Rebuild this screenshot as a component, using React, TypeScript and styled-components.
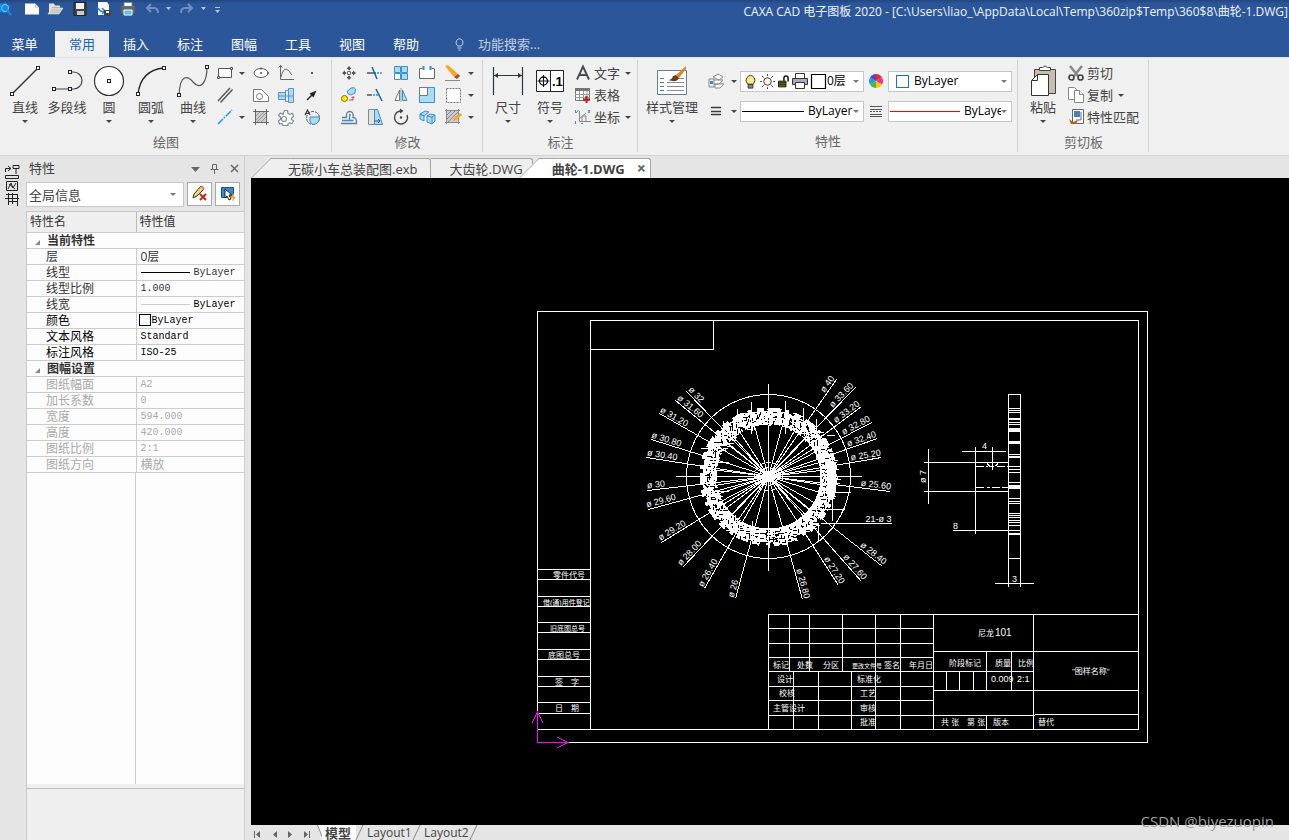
import React from "react";
import styled, { createGlobalStyle } from "styled-components";

const UI = `"Open Sans", "Noto Sans", "Noto Sans CJK SC", sans-serif`;
const BLUE = "#2b579a";

const Global = createGlobalStyle`
  *, *::before, *::after { box-sizing: border-box; }
  body { margin: 0; background: #e5e5e5; font-family: ${UI}; font-size: 13px; line-height: 16px; color: #444; overflow: hidden; }
  button, select, input { font: inherit; color: inherit; margin: 0; }
  button { padding: 0; border: 0; background: none; cursor: pointer; }
  svg { display: block; }
`;

const Shell = styled.div`
  display: flex;
  flex-direction: column;
  height: 100vh;
  min-height: 600px;
`;

/* ---------- icons ---------- */

const D = "#555";
const B = "#3a8fd0";
const L = "#a9dcf5";

const icons: Record<string, React.ReactNode> = {
  rect: <g fill="#fff" stroke={D}><path d="M2.5 4.500H15.500V13.500H2.500Z" /><path fill="#ddd" d="M1.500 12.500h2v2h-2zM14.500 3.500h2v2h-2z" /></g>,
  lines: <path d="M2 15L14 2M4.500 16.500L16.500 3.500" stroke={D} strokeWidth="1.400" />,
  guide: <path d="M2 16L16 2" stroke="#1a9be6" strokeWidth="1.500" strokeDasharray="7 1 2 1" />,
  ellipse: <g fill="#fff" stroke={D}><ellipse cx="9" cy="9" rx="7" ry="4.500" /><path d="M8.500 8.500h1v1h-1zM8.500 4h1v1h-1zM15.500 8.500h1v1h-1z" /></g>,
  contour: <g fill="#fff" stroke="#777"><path d="M1.500 3.500H9.500L16.500 10.500V15.500H1.500Z" /><circle cx="7.500" cy="10.500" r="3" /></g>,
  hatch: <g stroke="#666"><path d="M3.500 3.500H14.500V14.500H3.500Z" fill="#ccc" /><path d="M1 3.500H17M1 14.500H17M3.500 1V17M14.500 1V17" /><path d="M4 8L8 4M4 12L12 4M5 14L14 5M9 14L14 9" stroke="#999" /></g>,
  formula: <g stroke="#666" fill="none"><path d="M3.500 1V15.500H17M1.500 3.500L3.500 1.500 5.500 3.500" /><path d="M4 13Q6 5 9 5Q11 5 15 11" /></g>,
  shaft: <g stroke="#5d92bd"><path d="M1.500 6.500h7v7h-7z" fill={L} /><path d="M8.500 4.500h3v11h-3z" fill="#dff1fa" /><path d="M11.500 2.500h5v14h-5z" fill={L} /><path d="M1 10h16" /></g>,
  gear: <g fill="#fff" stroke="#7d8b99" strokeWidth="1.200"><path d="M7.500 2.500h3l.5 3 2 .8 2.500-1 1 3-2 1.700v1.500l2 1.500-1.500 2.500-2.500-.7-1.500 1v1.700H6l-1-2-2.500.5-1-3 2-1.500V9l-2-1.500 2-2.500 2.500 1.500z" /><circle cx="7" cy="11" r="2.500" /></g>,
  dot: <path d="M8 8h2v2h-2z" fill={D} />,
  arrow: <g><path d="M4 14L10 8" stroke="#222" strokeWidth="1.500" /><path d="M13.500 4.500L6.500 7.500 10.500 11.500Z" fill="#222" /></g>,
  local: <g><circle cx="10" cy="10" r="6.500" fill="none" stroke={D} strokeDasharray="3 1" /><path d="M7 9h9.500q0 7-6.500 7.500L7 14z" fill={L} stroke={B} /><path d="M2 7L4.500 2 7 7M3 5.500h3" stroke="#333" fill="none" strokeWidth="1.200" /></g>,
  move: <g fill={D}><path d="M9 2L11.500 5H6.500ZM9 16L11.500 13H6.500ZM2 9L5 6.500V11.500ZM16 9L13 6.500V11.500Z" /><path d="M8 4h2v2H8zM8 12h2v2H8zM4 8h2v2H4zM12 8h2v2h-2z" /><circle cx="9" cy="9" r="1.800" fill="none" stroke={D} /></g>,
  trim: <g fill="none"><path d="M1 9h9" stroke={D} strokeWidth="1.500" /><path d="M11 9h6" stroke={B} strokeWidth="1.300" strokeDasharray="2 1" /><path d="M6 3l5 12" stroke="#1368ad" strokeWidth="1.500" /></g>,
  array: <g stroke={B} fill={L}><path d="M2.500 2.500h6v6h-6zM9.500 2.500h6v6h-6zM9.500 9.500h6v6h-6z" /><path d="M2.500 9.500h6v6h-6z" fill="#fff" /></g>,
  chamfer: <g><path d="M1.500 5V14.500H16.500V5M1.500 4.500h3M16.500 4.500h-3" stroke="#666" fill="#fff" /><path d="M5.500 2v4M12.500 2v4" stroke={B} strokeWidth="2" /></g>,
  erase: <g><path d="M1 2L4 1 14 10 10 13Z" fill="#f6a81c" /><path d="M10 13l4-3 2 2-3 3z" fill="#9a4b33" /><path d="M1 16.500h15" stroke="#888" /></g>,
  copyObj: <g><path d="M7 5.500L11 2q4-1 4.500 1L15 7l-4 2q-4-1-4-3.500z" fill={L} stroke={B} /><circle cx="4.500" cy="12.500" r="3" fill="#ffe900" stroke="#806f00" /><path d="M9 14h4v-3M11.500 12L13 10.500l1.500 1.500" fill="none" stroke="#d33" /></g>,
  extend: <g fill="none"><path d="M1 9h5" stroke={D} strokeWidth="1.500" /><path d="M7 9h5" stroke={B} strokeDasharray="2 1" strokeWidth="1.500" /><path d="M10 3l6 12" stroke="#1368ad" strokeWidth="1.500" /></g>,
  mirror: <g><path d="M7.500 4v10.500H3z" fill="#fff" stroke="#777" /><path d="M10.500 4v10.500h4.500z" fill={L} stroke={B} /><path d="M9 2v14" stroke="#999" /></g>,
  scale: <g stroke={B}><path d="M1.500 1.500h15v15h-15z" fill={L} /><path d="M1.500 1.500h8v8h-8z" fill="#fff" stroke="#777" /></g>,
  select: <path d="M2.500 2.500h14v14h-14z" fill="#fff" stroke="#777" strokeDasharray="2 1" />,
  offset: <g fill="none"><path d="M1 15.500H16.500Q17 9.500 13 9.500Q14 3.500 9.500 3.500Q6 3.500 6.500 9.500H2" stroke="#667c91" strokeWidth="1.300" /><path d="M2 12.500H13.500M9.500 12V8.500Q11 6.500 9 6.500" stroke={B} strokeWidth="1.300" /></g>,
  stretch: <g><path d="M2.500 1.500h6v15h-6z" fill="#e4e4e4" stroke="#888" /><path d="M8.500 1.500h3l5 15h-8z" fill={L} stroke={B} /><path d="M8 13h5M12 11l2 2-2 2" fill="none" stroke={D} /></g>,
  rotate: <g fill="none" stroke="#444" strokeWidth="1.400"><path d="M9 3A6.500 6.500 0 1 0 15 7" /><path d="M8 0.500L11.500 3 8 5.500" fill="#444" stroke="none" /><circle cx="9" cy="9.500" r="1.200" fill="#444" stroke="none" /></g>,
  explode: <g fill={L} stroke={B}><path d="M2 6l5-3 4 1-5 4zM2 6v5l4 2V8zM9 8l3-2 5 1v6l-3 3-5-2zM9 8l5 1v7M14 9l3-2" /></g>,
  editHatch: <g><path d="M2.500 2.500h12v12h-12z" fill="#ccc" stroke={D} /><path d="M1 2.500h15M1 14.500h15M2.500 1v15M14.500 1v15M3 7l4-4M3 11l8-8M4 14l10-10" stroke="#888" /><path d="M9 13l1-3 6-5 2 2-6 5z" fill="#f6a81c" /></g>,
  letterA: <path d="M3 15.500L9 2.500 15 15.500M5.500 11h7" fill="none" stroke="#444b55" strokeWidth="1.900" />,
  table: <g><path d="M1.500 2.500h14v12h-14z" fill="#fff" stroke="#777" /><path d="M1 2h15v3H1z" fill="#777" /><path d="M1 8.500h15M1 11.500h15M5.500 5v9M9.500 5v9M13 5v9" stroke="#999" /><path d="M9 13.500h7M12.500 10v7" stroke="#c4161c" strokeWidth="2" /></g>,
  coord: <g fill="none"><path d="M5.500 3v10.500H17M5 11l7-6M8 13V8h4v5" stroke="#888" /><path d="M1.500 2v3M4.500 2L2 5M14 2l2 3M16 2l-2 3M1.500 13v3M7 15.500h2" stroke={B} /></g>,
  layers: <g fill="#fff" stroke="#888"><path d="M6 5l5-3 5 3-4 3zM6 8l10 0-4 4H6zM8 12h9l-4 4H8z" /><path d="M2 7h5v8H2z" fill="#eee" /><path d="M3 9h3v3H3z" fill="#4286c5" stroke="none" /></g>,
  weights: <path d="M4 5.500h10M4 9.500h10M4 12.500h10" stroke="#333b45" strokeWidth="1.400" />,
  wheel: <g><path d="M9 9V2A7 7 0 0 1 15 5.500z" fill="#ea2630" /><path d="M9 9l6-3.500a7 7 0 0 1 0 7z" fill="#f0308c" /><path d="M9 9l6 3.500A7 7 0 0 1 9 16z" fill="#ffc400" /><path d="M9 9v7a7 7 0 0 1-6-3.500z" fill="#4cb848" /><path d="M9 9l-6 3.500a7 7 0 0 1 0-7z" fill="#1e9ad6" /><path d="M9 9L3 5.500A7 7 0 0 1 9 2z" fill="#5543c6" /></g>,
  linetype: <g stroke="#555"><path d="M3 4.500h12M3 14.500h12M3 7.500h12M3 12.500h12" /><path d="M3 9.500h12" strokeDasharray="2 1" /></g>,
  bulb: <g><path d="M6 12Q3 8 5 5Q9 0 13 5Q15 8 12 12z" fill="#ffe680" stroke="#333" /><path d="M6.500 12h5v4h-5z" fill="#888" stroke="#333" /></g>,
  sun: <g stroke="#333"><circle cx="9" cy="9" r="4" fill="#fff3e0" /><path d="M9 1v2M9 15v2M1 9h2M15 9h2M3 3l2 2M13 13l2 2M3 15l2-2M13 5l2-2" /></g>,
  lock: <g><path d="M3 8.500h9v7H3z" fill="#6f7d00" stroke="#111" /><path d="M9.500 8V5Q9.500 2.500 12 2.500T14.500 5V9" fill="none" stroke="#111" strokeWidth="1.800" /><path d="M3 10.500h9M3 13h9" stroke="#111" /></g>,
  printer: <g stroke="#333"><path d="M4.500 1.500h9v5h-9z" fill="#fff" /><path d="M1.500 6.500h15v6h-15z" fill="#aab" /><path d="M4.500 10.500h9v6h-9z" fill="#fff" /></g>,
  swatch: <path d="M2.500 2.500h14v14h-14z" fill="#fff" stroke="#000" strokeWidth="1.200" />,
  cut: <g><path d="M3 2L11 12M15 2L7 12" stroke="#888" strokeWidth="2.500" /><circle cx="4.500" cy="13.500" r="2.500" fill="none" stroke="#444" strokeWidth="1.700" /><circle cx="13.500" cy="13.500" r="2.500" fill="none" stroke="#444" strokeWidth="1.700" /></g>,
  copy: <g fill="#fff" stroke="#888"><path d="M1.500 1.500h6l3 3v9h-9z" /><path d="M7.500 4.500h5l4 4v8h-9z" /><path d="M12.500 4.500v4h4" /></g>,
  match: <g><path d="M5.500 1.500h11v14h-11z" fill="#fff" stroke="#666" /><path d="M7 3h6v6H7z" fill="#4a80b5" /><path d="M14 4v8M9 12h5" stroke="#666" /><path d="M2 11l4 3 5-2-2 4H4z" fill="#a96021" /></g>,
};

const Icon = ({ name, size = 18 }: { name: string; size?: number }) => (
  <svg width={size} height={size} viewBox="0 0 18 18" fill="none" aria-hidden="true">{icons[name]}</svg>
);

const Node = ({ x, y }: { x: number; y: number }) => <rect x={x - 1.5} y={y - 1.5} width="3" height="3" fill="#fff" stroke="#222" />;

const bigIcons: Record<string, React.ReactNode> = {
  line: <><path d="M5 31L31 5" stroke="#333" strokeWidth="1.500" /><Node x={5} y={31} /><Node x={31} y={5} /></>,
  poly: <><path d="M21 9H24.500A8.500 8.500 0 0 1 24.500 26H5" stroke="#3a4250" strokeWidth="1.200" /><Node x={5} y={26} /><Node x={21} y={26} /><Node x={21} y={9} /></>,
  circle: <><circle cx="18" cy="18" r="14.500" fill="#fff" stroke="#333" strokeWidth="1.200" /><Node x={18} y={18} /></>,
  arc: <><path d="M5 31Q8 7 31 5" stroke="#222" strokeWidth="1.300" /><Node x={5} y={31} /><Node x={31} y={5} /></>,
  spline: <><path d="M4 32C5 10 13 13 18 19C26 28 32 19 32 4" stroke="#555" strokeWidth="1.200" /><Node x={4} y={32} /><Node x={32} y={4} /></>,
  dim: <><path d="M3.500 4V32M32.500 4V32M4 12.500H32" stroke="#2d3640" strokeWidth="1.200" /><path d="M4 12.500l4-2.500v5zM32 12.500l-4-2.500v5z" fill="#2d3640" /></>,
  symbol: <><path d="M4.500 7.500h27v21h-27zM18.500 7.500v21" fill="#fff" stroke="#222" /><circle cx="11.500" cy="18" r="4" stroke="#111" strokeWidth="1.300" /><path d="M5.500 18h12M11.500 12v12" stroke="#111" /><text x="20" y="23" fontSize="13" fontWeight="700" fontFamily="Liberation Sans, sans-serif" fill="#000">.1</text></>,
  style: <><path d="M3.500 7.500h29v24h-29z" fill="#fff" stroke="#5f7f9c" /><path d="M6 15.500h4M6 19.500h4M6 23.500h4M6 27.500h4" stroke="#578" /><path d="M13 19.500h17M13 23.500h17M13 27.500h17M22 15.500h8" stroke="#88a" /><path d="M32 3L22 12l3 3 7-9z" fill="#d9892c" /><path d="M14 17q4 0 5-4l3-1 3 3q-2 5-11 2z" fill="#6d3c14" /></>,
  paste: <><path d="M9.500 6.500h21v24h-21z" fill="#c8bdb1" stroke="#444" /><path d="M14.500 7.500v-3h3q2.500-3 5 0h3v3z" fill="#fff" stroke="#444" /><path d="M12.500 11.500h11v21h-17v-15z" fill="#fff" stroke="#333" /><path d="M12.500 11.500v6h-6" stroke="#333" /></>,
};

const Caret = styled.span<{ $light?: boolean }>`
  flex: none;
  width: 0;
  height: 0;
  border: 3px solid transparent;
  border-top-color: ${(p) => (p.$light ? "#777" : "#444")};
  border-bottom: 0;
`;

/* ---------- title bar and menu ---------- */

const TitleBar = styled.header`
  display: flex;
  align-items: flex-start;
  justify-content: space-between;
  height: 31px;
  background: linear-gradient(#234680 0, ${BLUE} 4px);
  color: #f0f4fa;
`;
const QuickBar = styled.div`display: flex; flex: none;`;
const Title = styled.h1`
  margin: 4px 1px 0 0;
  font-size: 12px;
  line-height: 16px;
  font-weight: 400;
  white-space: nowrap;
`;

const QuickAccess = () => (
  <QuickBar>
    <svg width="224" height="20" viewBox="0 0 224 20" fill="none" role="img" aria-label="快速启动工具栏">
      <path d="M0 3l3 1 3-2 1 3 3 0-1 4-3 4-6-1z" fill="#1386e8" />
      <circle cx="5" cy="8" r="3.500" stroke="#7fd0ff" /><path d="M7 10l4 5" stroke="#1b8df0" strokeWidth="2" />
      <path d="M25 3.500h10l4 4v7H25z" fill="#fff" /><path d="M35 3.500l4 4h-4z" fill="#ccc" />
      <path d="M49 3.500h5l1 2h5v2H52l-3 6z" fill="#e8e4dc" /><path d="M52 8h11l-4 6H48z" fill="#d0ccc4" stroke="#fff" strokeWidth=".5" />
      <path d="M74 2.500h12v13H74z" fill="#444" stroke="#222" /><path d="M76 3h8v6h-8z" fill="#f4f4f4" /><path d="M77 11h7v4h-7z" fill="#ccc" />
      <path d="M98 2h9l2 3v10H98z" fill="#fff" /><path d="M98 8q3 5 6 3M102 8l3 3-3 3" stroke="#278ad0" strokeWidth="1.500" /><path d="M104 10h7v6h-7z" fill="#444" /><path d="M106 11h3v2h-3z" fill="#fff" />
      <path d="M124 2.500h8v5h-8z" fill="#fff" stroke="#888" /><path d="M121 6h14v7h-14z" fill="#666" /><path d="M124 10h8v5h-8z" fill="#4fc3ea" stroke="#fff" />
      <g stroke="#7191c1" strokeWidth="2"><path d="M147 8h7q4 0 4 5M151 4l-4 4 4 4" /><path d="M192 8h-7q-4 0-4 5M188 4l4 4-4 4" /></g>
      <path d="M166 7h5l-2.500 3zM201 7h5l-2.500 3zM215 10h5l-2.500 3z" fill="#b8c8e0" /><path d="M215 7.500h5" stroke="#b8c8e0" />
    </svg>
  </QuickBar>
);

const MenuBar = styled.nav`
  display: flex;
  height: 26px;
  background: ${BLUE};
  color: #fff;
`;
const MenuTab = styled.button<{ $active?: boolean }>`
  width: 54px;
  line-height: 24px;
  color: ${(p) => (p.$active ? "#1364c4" : "#fff")};
  background: ${(p) => (p.$active ? "#f0f0f0" : "transparent")};
`;
const FileTab = styled(MenuTab)`width: 49px; margin-right: 6px;`;
const Search = styled.label`
  display: flex;
  align-items: center;
  gap: 12px;
  margin-left: 20px;
  input { width: 120px; border: 0; padding: 0; background: none; outline: 0; line-height: 24px; }
  input::placeholder { color: #c3d0e4; opacity: 1; }
`;

/* ---------- ribbon ---------- */

const Ribbon = styled.div`
  display: flex;
  flex: none;
  height: 99px;
  background: #f0f0f0;
  border-top: 1px solid #dfe3ea;
  border-bottom: 1px solid #d2d2d2;
`;
const GroupBox = styled.section<{ $w: number }>`
  display: flex;
  flex-direction: column;
  flex: none;
  width: ${(p) => p.$w}px;
  padding: 4px 4px 0;
  background: linear-gradient(#d2d2d2, #d2d2d2) right 2px / 1px 92px no-repeat;
`;
const GroupBody = styled.div`display: flex; height: 66px;`;
const GroupTitle = styled.h2`
  margin: 0;
  font-size: 13px;
  font-weight: 400;
  line-height: 28px;
  text-align: center;
  color: #666;
`;
const BigButton = styled.button<{ $wide?: boolean }>`
  display: flex;
  flex-direction: column;
  align-items: center;
  flex: none;
  width: ${(p) => (p.$wide ? 60 : 42)}px;
  padding-top: 1px;
  line-height: 16px;
  white-space: nowrap;
  ${Caret} { margin-top: 5px; }
`;
const ToolGrid = styled.div<{ $cols: string }>`
  display: grid;
  grid-template-columns: ${(p) => p.$cols};
  grid-auto-rows: 22px;
`;
const IconButton = styled.button`display: flex; align-items: center; justify-content: center;`;
const RowButton = styled.button`
  display: flex;
  align-items: center;
  gap: 2px;
  height: 22px;
  white-space: nowrap;
  ${Caret} { margin-left: 3px; }
`;
const Stack = styled.div`display: flex; flex-direction: column; margin-left: 3px;`;
const PropGrid = styled.div`
  display: grid;
  grid-template-columns: 24px 12px 124px 24px 124px;
  grid-auto-rows: 30px;
  align-items: center;
  margin: 4px 0 0 2px;
`;
const Combo = styled.div`
  display: flex;
  align-items: center;
  height: 21px;
  padding: 0 4px 0 1px;
  background: #fff;
  border: 1px solid #c6c6c6;
  overflow: hidden;
  font-size: 12px;
  color: #000;
`;
const Select = styled.select`
  flex: 1;
  min-width: 0;
  padding: 0;
  border: 0;
  background: none;
  appearance: none;
  outline: 0;
  line-height: 18px;
`;
const LineSample = styled.span<{ $w: number; $c: string }>`
  flex: none;
  width: ${(p) => p.$w}px;
  height: 1px;
  margin: 0 4px 0 0;
  background: ${(p) => p.$c};
`;
const ColorBox = styled.span`
  width: 13px;
  height: 13px;
  margin: 0 5px 0 6px;
  border: 1px solid #1173d0;
  flex: none;
`;

const Big = ({ icon, label, caret = true, wide }: { icon: string; label: string; caret?: boolean; wide?: boolean }) => (
  <BigButton $wide={wide}>
    <svg width="36" height="36" viewBox="0 0 36 36" fill="none" aria-hidden="true">{bigIcons[icon]}</svg>
    {label}
    {caret && <Caret />}
  </BigButton>
);
const Tool = ({ icon, label }: { icon: string; label: string }) => (
  <IconButton aria-label={label}><Icon name={icon} /></IconButton>
);
const Drop = ({ label }: { label: string }) => <IconButton aria-label={label}><Caret /></IconButton>;
const Blank = styled.span``;

const Group = ({ title, w, children }: { title: string; w: number; children: React.ReactNode }) => (
  <GroupBox $w={w}><GroupBody>{children}</GroupBody><GroupTitle>{title}</GroupTitle></GroupBox>
);

const DrawGroup = () => (
  <Group title="绘图" w={332}>
    <Big icon="line" label="直线" /><Big icon="poly" label="多段线" caret={false} /><Big icon="circle" label="圆" />
    <Big icon="arc" label="圆弧" /><Big icon="spline" label="曲线" />
    <ToolGrid $cols="22px 12px 25px 26px 26px">
      <Tool icon="rect" label="矩形" /><Drop label="矩形选项" /><Tool icon="ellipse" label="椭圆" /><Tool icon="formula" label="公式曲线" /><Tool icon="dot" label="点" />
      <Tool icon="lines" label="平行线" /><Blank /><Tool icon="contour" label="多边形" /><Tool icon="shaft" label="孔轴" /><Tool icon="arrow" label="箭头" />
      <Tool icon="guide" label="中心线" /><Drop label="中心线选项" /><Tool icon="hatch" label="剖面线" /><Tool icon="gear" label="齿形" /><Tool icon="local" label="局部放大" />
    </ToolGrid>
  </Group>
);

const ModifyGroup = () => (
  <Group title="修改" w={151}>
    <ToolGrid $cols="repeat(5, 26px) 10px">
      <Tool icon="move" label="平移" /><Tool icon="trim" label="裁剪" /><Tool icon="array" label="阵列" /><Tool icon="chamfer" label="过渡" /><Tool icon="erase" label="删除" /><Drop label="删除选项" />
      <Tool icon="copyObj" label="平移复制" /><Tool icon="extend" label="延伸" /><Tool icon="mirror" label="镜像" /><Tool icon="scale" label="缩放" /><Tool icon="select" label="选择" /><Drop label="选择选项" />
      <Tool icon="offset" label="等距线" /><Tool icon="stretch" label="拉伸" /><Tool icon="rotate" label="旋转" /><Tool icon="explode" label="分解" /><Tool icon="editHatch" label="填充编辑" /><Drop label="编辑选项" />
    </ToolGrid>
  </Group>
);

const AnnotateGroup = () => (
  <Group title="标注" w={155}>
    <Big icon="dim" label="尺寸" /><Big icon="symbol" label="符号" />
    <Stack>
      <RowButton><Icon name="letterA" />文字<Caret /></RowButton>
      <RowButton><Icon name="table" />表格</RowButton>
      <RowButton><Icon name="coord" />坐标<Caret /></RowButton>
    </Stack>
  </Group>
);

const PropertyGroup = () => (
  <Group title="特性" w={380}>
    <Big icon="style" label="样式管理" wide />
    <PropGrid>
      <Tool icon="layers" label="图层" /><Drop label="图层选项" />
      <Combo>
        <Icon name="bulb" size={17} /><Icon name="sun" size={17} /><Icon name="lock" size={15} /><Icon name="printer" size={18} /><Icon name="swatch" size={18} />
        <Select aria-label="当前图层"><option>0层</option></Select><Caret $light />
      </Combo>
      <Tool icon="wheel" label="颜色" />
      <Combo><ColorBox /><Select aria-label="当前颜色"><option>ByLayer</option></Select><Caret $light /></Combo>
      <Tool icon="weights" label="线宽" /><Drop label="线宽选项" />
      <Combo><LineSample $w={62} $c="#000" /><Select aria-label="当前线宽"><option>ByLayer</option></Select><Caret $light /></Combo>
      <Tool icon="linetype" label="线型" />
      <Combo><LineSample $w={70} $c="#f00" /><Select aria-label="当前线型"><option>ByLayer</option></Select><Caret $light /></Combo>
    </PropGrid>
  </Group>
);

const ClipGroup = () => (
  <Group title="剪切板" w={131}>
    <Big icon="paste" label="粘贴" />
    <Stack>
      <RowButton><Icon name="cut" />剪切</RowButton>
      <RowButton><Icon name="copy" />复制<Caret /></RowButton>
      <RowButton><Icon name="match" />特性匹配</RowButton>
    </Stack>
  </Group>
);

/* ---------- property panel ---------- */

const Body = styled.main`display: flex; flex: 1; min-height: 0;`;
const Rail = styled.aside`flex: none; width: 26px; padding: 7px 0 0 4px;`;
const Panel = styled.aside`
  display: flex;
  flex-direction: column;
  flex: none;
  width: 219px;
  border-right: 1px solid #cfcfcf;
`;
const PanelHead = styled.div`
  display: flex;
  align-items: center;
  height: 26px;
  padding: 0 4px 0 3px;
  h2 { flex: 1; margin: 0; font-size: 13px; font-weight: 400; line-height: 22px; padding-bottom: 3px; }
`;
const PanelTools = styled.div`
  display: flex;
  gap: 3px;
  height: 25px;
`;
const PanelCombo = styled(Combo)`
  width: 158px;
  height: 25px;
  padding: 0 7px 0 2px;
  font-size: 13px;
  color: #444;
  border-color: #c8c8c8;
`;
const SquareButton = styled(IconButton)`
  width: 25px;
  height: 24px;
  background: #fdfdfd;
  border: 1px solid #aaa;
`;
const Sheet = styled.div`
  display: flex;
  flex-direction: column;
  flex: 1;
  min-height: 0;
  margin-top: 4px;
  border-top: 1px solid #c8c8c8;
  border-left: 1px solid #c8c8c8;
  background: #efefef;
`;
const Filler = styled.div`
  flex: 1;
  background: linear-gradient(#ccc, #ccc) 108px 0 / 1px 100% no-repeat #fdfdfd;
`;
const Note = styled.div`
  height: 56px;
  border-top: 4px solid #efefef;
  box-shadow: inset 0 1px #bdbdbd;
`;
const Table = styled.table`
  width: 100%;
  border-collapse: collapse;
  table-layout: fixed;
  background: #fdfdfd;
  font-size: 12px;
  line-height: 15px;
  color: #333;
  th, td { padding: 0; height: 16px; text-align: left; font-weight: 400; border-bottom: 1px solid #ccc; white-space: nowrap; }
`;
const HeadCell = styled.th<{ $w?: number }>`
  && { height: 20px; padding-left: 3px; background: #efefef; }
  &:first-child { border-right: 1px solid #bbb; }
  ${(p) => (p.$w ? `width: ${p.$w}px;` : "")}
`;
const SectionCell = styled.th`
  && { font-weight: 700; padding-left: 8px; }
  svg { display: inline-block; margin-right: 7px; }
`;
const NameCell = styled.th`&& { padding-left: 19px; border-right: 1px solid #ccc; }`;
const ValueCell = styled.td`&& { padding-left: 4px; }`;
const Value = styled.div`
  display: flex;
  align-items: center;
  height: 15px;
  font-family: "Liberation Mono", "Noto Sans CJK SC", monospace;
  font-size: 10px;
`;
const Cjk = styled.span`font-family: ${UI}; font-size: 12px;`;
const Row = styled.tr<{ $tone?: "dark" | "dim" }>`
  color: ${(p) => (p.$tone === "dark" ? "#000" : p.$tone === "dim" ? "#a9a9a9" : "#333")};
`;
const Strong = styled.span`color: #000;`;
const TinyBox = styled.span`width: 12px; height: 12px; margin: 0 1px 0 -2px; border: 1px solid #000; background: #fff;`;

type RowData = [string, React.ReactNode, ("dark" | "dim")?];
const current: RowData[] = [
  ["层", <Cjk>0层</Cjk>],
  ["线型", <><LineSample $w={49} $c="#000" />ByLayer</>],
  ["线型比例", "1.000"],
  ["线宽", <><LineSample $w={49} $c="#ccc" /><Strong>ByLayer</Strong></>],
  ["颜色", <><TinyBox />ByLayer</>, "dark"],
  ["文本风格", "Standard", "dark"],
  ["标注风格", "ISO-25", "dark"],
];
const frame: RowData[] = [
  ["图纸幅面", "A2", "dim"],
  ["加长系数", "0", "dim"],
  ["宽度", "594.000", "dim"],
  ["高度", "420.000", "dim"],
  ["图纸比例", "2:1", "dim"],
  ["图纸方向", <Cjk>横放</Cjk>, "dim"],
];

const Section = ({ title, rows }: { title: string; rows: RowData[] }) => (
  <tbody>
    <tr><SectionCell colSpan={2}><svg width="5" height="5"><path d="M5 0V5H0Z" fill="#888" /></svg>{title}</SectionCell></tr>
    {rows.map(([name, value, tone]) => (
      <Row key={name} $tone={tone}><NameCell scope="row">{name}</NameCell><ValueCell><Value>{value}</Value></ValueCell></Row>
    ))}
  </tbody>
);

const PropertyPanel = () => (
  <Panel>
    <PanelHead>
      <h2>特性</h2>
      <svg width="50" height="12" viewBox="0 0 50 12" fill="none" stroke="#666" role="img" aria-label="面板控制">
        <path d="M1 4h9L5.500 9z" fill="#666" stroke="none" />
        <path d="M22.500 1.500h4v5h-4zM20.500 6.500h8M24.500 7v4M26.500 2v4" />
        <path d="M41 2l7 7M48 2l-7 7" strokeWidth="1.500" />
      </svg>
    </PanelHead>
    <PanelTools>
      <PanelCombo><Select aria-label="选择对象"><option>全局信息</option></Select><Caret $light /></PanelCombo>
      <SquareButton aria-label="清除选择">
        <svg width="18" height="18" fill="none"><path d="M2 13l1-4 7-8 3 3-7 7z" fill="#f5d565" stroke="#333" /><path d="M10 1l3 3" stroke="#d77" strokeWidth="2" /><path d="M9 9l6 6M15 9l-6 6" stroke="#cc2418" strokeWidth="2" /></svg>
      </SquareButton>
      <SquareButton aria-label="快速选择">
        <svg width="18" height="18" fill="none"><path d="M2.500 2.500h12v10h-12z" fill="#3f86cc" stroke="#17518c" /><path d="M6 4v9l2-2 2 4 2-1-2-4h3z" fill="#fff" stroke="#222" /><path d="M15 8l-4 5h3l-1 4 4-5h-2z" fill="#f5a623" /></svg>
      </SquareButton>
    </PanelTools>
    <Sheet>
      <Table>
        <thead><tr><HeadCell $w={109}>特性名</HeadCell><HeadCell>特性值</HeadCell></tr></thead>
        <Section title="当前特性" rows={current} />
        <Section title="图幅设置" rows={frame} />
      </Table>
      <Filler />
      <Note />
    </Sheet>
  </Panel>
);

/* ---------- document area ---------- */

const Work = styled.section`
  display: flex;
  flex-direction: column;
  flex: 1;
  min-width: 0;
  margin-left: 6px;
`;
const DocTabs = styled.div`display: flex; align-items: flex-end; flex: none; height: 22px;`;
const DocTab = styled.button<{ $active?: boolean; $slant?: boolean; $pad: string }>`
  position: relative;
  flex: none;
  height: 20px;
  margin-left: ${(p) => (p.$active ? 6 : p.$slant ? 20 : 0)}px;
  padding: ${(p) => p.$pad};
  background: ${(p) => (p.$active ? "#fff" : "#efefef")};
  border: 1px solid #a5a5a5;
  border-width: 1px 1px 0 0;
  border-top-right-radius: 3px;
  font-weight: ${(p) => (p.$active ? 700 : 400)};
  line-height: 18px;
  white-space: nowrap;
  text-align: left;
  &::before {
    content: "";
    display: ${(p) => (p.$slant ? "block" : "none")};
    position: absolute;
    left: -10px;
    top: -1px;
    width: 20px;
    height: 20px;
    background: inherit;
    border: 1px solid #a5a5a5;
    border-width: 1px 0 0 1px;
    transform: skewX(-45deg);
  }
  span { position: relative; }
`;
const Close = styled.span`margin-left: 12px; font-size: 16px; color: #666;`;

const Canvas = styled.div`
  flex: 1;
  min-height: 0;
  background: #000;
  svg { width: 100%; height: 100%; }
`;
const SheetTabs = styled.div`
  display: flex;
  flex: none;
  height: 15px;
  font-size: 12px;
  line-height: 14px;
`;
const SheetTab = styled.button<{ $active?: boolean }>`
  position: relative;
  height: 15px;
  width: 57px;
  padding-left: 3px;
  text-align: left;
  line-height: 14px;
  font-weight: ${(p) => (p.$active ? 700 : 400)};
  font-size: ${(p) => (p.$active ? 13 : 12)}px;
  ${(p) => p.$active && "width: 42px; background: linear-gradient(90deg, #fff 34px, transparent 34px);"}
  &::after {
    content: "";
    position: absolute;
    right: 4px;
    top: 0;
    width: 1px;
    height: 15px;
    background: #888;
    transform: skewX(-25deg);
  }
`;

/* Leader ends, relative to the wheel centre, with the diameter each one carries. */
const leaders: [string, number, number][] = [
  ["ø 40", 68, -97], ["ø 33.60", 87, -89], ["ø 33.20", 93, -70], ["ø 32.80", 103, -54], ["ø 32.40", 109, -38],
  ["ø 25.20", 113, -19], ["ø 25.60", 122, 15], ["ø 28.40", 114, 90], ["ø 27.60", 93, 105], ["ø 27.20", 70, 109],
  ["ø 26.80", 34, 123], ["ø 26", -33, 122], ["ø 26.40", -64, 112], ["ø 28.00", -86, 91], ["ø 29.20", -107, 66],
  ["ø 29.60", -121, 33], ["ø 30", -121, 14], ["ø 30.40", -122, -19], ["ø 30.80", -118, -37], ["ø 31.20", -110, -63],
  ["ø 31.60", -93, -76], ["ø 32", -82, -85],
];

const toothPath = (seed: number, count: number, rMin: number, rMax: number) => {
  let s = seed;
  const rnd = () => ((s = (s * 16807) % 2147483647) / 2147483647);
  let d = "";
  for (let i = 0; i < count; i++) {
    const a = rnd() * Math.PI * 2;
    const r = rMin + rnd() * (rMax - rMin);
    const x = Math.round(Math.cos(a) * r);
    const y = Math.round(Math.sin(a) * r);
    const len = 1 + Math.round(rnd() * 4);
    d += rnd() > 0.5 ? `M${x} ${y}h${len}v1h-${len}z` : `M${x} ${y}h1v${len}h-1z`;
  }
  return d;
};
const ringSpecks = toothPath(7, 420, 52, 69);
const ringHoles = toothPath(91, 480, 53, 66);

const Wheel = () => (
  <g transform="translate(768.500 476.500)">
    <circle r="82" />
    <path d="M0-93V94M-93 0H93" />
    <circle r="59" strokeWidth="14" />
    <circle r="67" strokeWidth="4" strokeDasharray="7 5 12 4 4 6" />
    <path d={ringHoles} fill="#000" stroke="none" />
    <path d={ringSpecks} fill="#fff" stroke="none" />
    <path d="M60-18V20M63-14V18M66-14V16" strokeWidth="3" />
    <path d="M-17-75V-43M17-76V-43M35-69V-53M-31-68V-56M48-58V-42M-45-56V-40M-68-28H-50M58-41H66M43 33H76M50 16H82M64 10V44M50 47V65M-33 38V54M-16 44V66M0 36V64M-56-14H-40M-56 15H-40M-43-33H-35" />
    <circle r="14" strokeDasharray="5 2" />
    <circle r="9" strokeDasharray="3 1" />
    <circle r="4" strokeWidth="3" />
    {leaders.map(([label, x, y]) => {
      const r = Math.hypot(x, y);
      const right = x > 0;
      const angle = (Math.atan2(y, x) * 180) / Math.PI + (right ? 0 : 180);
      return (
        <g key={label} transform={`rotate(${angle})`}>
          <path d={right ? `M-56 0H${r}` : `M56 0H-${r}`} />
          <text x={right ? r : -r} y="-2" textAnchor={right ? "end" : "start"}>{label}</text>
        </g>
      );
    })}
    <path d="M52 47H123" />
    <text x="123" y="45" textAnchor="end">21-ø 3</text>
  </g>
);

const sideMarks = [408, 410, 412, 418, 419, 422, 424, 428, 429, 430, 431, 441, 442, 443, 454, 456, 457, 466, 469, 472, 482, 485, 486, 487, 488, 498, 501, 503, 513, 515, 517, 520, 522, 525, 530, 533, 534, 558];
const SideView = () => (
  <g>
    <path d="M1008.500 587V394.500H1020.500V587" />
    <path d={sideMarks.map((y) => `M1008 ${y}.500h12`).join("")} />
    <path d="M928.500 449V504M924 462.500H1008M924 491.500H1008M975.500 447V534M962 451.500H1006M992.500 447V470M953 530.500H1020M995 583.500H1034" />
    <path d="M976 466.500h12M997 466.500h11M976 487.500h9M987 487.500h3M992 487.500h16M987 463.500l3 3h5l3-3" strokeDasharray="8 2" />
    <text x="982" y="449">4</text>
    <text x="953" y="529">8</text>
    <text x="1012" y="582">3</text>
    <text transform="translate(926 483) rotate(-90)">ø 7</text>
  </g>
);

const cells: [number, number, string][] = [
  [773, 668, "标记"], [797, 668, "处数"], [823, 668, "分区"], [852, 668, "更改文件号"], [884, 668, "签名"], [909, 668, "年月日"],
  [777, 682, "设计"], [779, 696, "校核"], [773, 711, "主管设计"], [857, 682, "标准化"], [860, 696, "工艺"], [860, 711, "审核"], [860, 725, "批准"],
  [949, 666, "阶段标记"], [995, 666, "质量"], [1018, 666, "比例"], [941, 725, "共 张"], [967, 725, "第 张"], [993, 725, "版本"], [1038, 725, "替代"],
  [978, 636, "尼龙"], [1072, 674, "\"图样名称\""],
  [553, 578, "零件代号"], [543, 605, "借(通)用件登记"], [550, 631, "旧底图总号"], [548, 658, "底图总号"], [555, 685, "签　字"], [555, 711, "日　期"],
];
const cellSize = (text: string) => (text === "更改文件号" ? 6 : text.length > 4 && !text.includes('"') ? 7 : 8);

const TitleBlock = () => (
  <g>
    <path d="M537.500 311.500H1147.500V742.500H537.500ZM590.500 320.500H1138.500V729.500H590.500ZM590.500 349.500H713.500V320.500M537.500 729.500H590" />
    <path d={[569, 579, 596, 606, 622, 632, 649, 659, 676, 686, 702, 713].map((y) => `M537 ${y}.500h53`).join("")} />
    <path d={[628, 643, 657, 671, 686, 700, 715].map((y) => `M768 ${y}.500h165`).join("")} />
    <path d="M768.500 729V614.500H1138M933.500 614V729M1033.500 614V729M875.500 614V729M900.500 614V729M789.500 614V671M809.500 614V671M842.500 614V671M793.500 671V729M818.500 671V729M851.500 671V729" />
    <path d="M933 651.500H1138M933 671.500H1033M933 690.500H1138M933 715.500H1035M1035 714.500H1138M986.500 651V690M1011.500 651V690M986.500 715V729M946.500 671V690M959.500 671V690M973.500 671V690" />
    {cells.map(([x, y, t]) => <text key={`${x}-${y}`} x={x} y={y} fontSize={cellSize(t)}>{t}</text>)}
    <text x="995" y="636" fontSize="10">101</text>
    <text x="991" y="682">0.009</text>
    <text x="1017" y="682">2:1</text>
    <path d="M537.500 742.500V713M532 723L537.500 712 543 723M537.500 742.500H567M557 737L568 742.500 557 748" stroke="#f0f" />
  </g>
);

const Drawing = () => (
  <svg viewBox="251 178 1038 647" fill="none" stroke="#fff" shapeRendering="crispEdges" role="img" aria-label="曲轮-1 图纸">
    <style>{`.cad text { fill: #fff; stroke: none; font-family: "Liberation Sans", "Noto Sans CJK SC", sans-serif; }`}</style>
    <g className="cad" fontSize="9">
      <Wheel />
      <SideView />
      <TitleBlock />
    </g>
  </svg>
);

const Watermark = styled.p`
  position: absolute;
  right: 15px;
  bottom: 9px;
  margin: 0;
  font-size: 15px;
  line-height: 20px;
  color: #a0a0a0;
`;

export default function App() {
  return (
    <Shell>
      <Global />
      <TitleBar>
        <QuickAccess />
        <Title>CAXA CAD 电子图板 2020 - [C:\Users\liao_\AppData\Local\Temp\360zip$Temp\360$8\曲轮-1.DWG]</Title>
      </TitleBar>
      <MenuBar>
        <FileTab>菜单</FileTab>
        <MenuTab $active>常用</MenuTab>
        {["插入", "标注", "图幅", "工具", "视图", "帮助"].map((t) => <MenuTab key={t}>{t}</MenuTab>)}
        <Search>
          <svg width="13" height="14" viewBox="0 0 13 14" fill="none" stroke="#c3d0e4"><path d="M4.500 9Q2 6 3.500 3.500Q6.500 0 9.500 3.500Q11 6 8.500 9zM4.500 11h4M5.500 13h2" /></svg>
          <input aria-label="功能搜索" placeholder="功能搜索..." />
        </Search>
      </MenuBar>
      <Ribbon>
        <DrawGroup />
        <ModifyGroup />
        <AnnotateGroup />
        <PropertyGroup />
        <ClipGroup />
      </Ribbon>
      <Body>
        <Rail>
          <svg width="16" height="44" viewBox="0 0 16 44" fill="none" stroke="#222" role="img" aria-label="图库">
            <path d="M1.500 9V5.500H6M4 3l3 2.500L4 8M9 2.500h6v3H9zM12 6v5M1.500 12.500h13v3h-13z" />
            <path d="M2.500 18.500h11v9h-11zM4 26l3-6 2 5 3-5M5 21l6 5" />
            <path d="M2 31.500h12M1 35.500h14M4.500 30v12M8.500 30v11M13.500 31v12M4 38.500h9" />
          </svg>
        </Rail>
        <PropertyPanel />
        <Work>
          <DocTabs>
            <DocTab $slant $pad="0 13px 0 17px"><span>无碳小车总装配图.exb</span></DocTab>
            <DocTab $pad="0 9px 0 18px"><span>大齿轮.DWG</span></DocTab>
            <DocTab $active $slant $pad="0 4px 0 13px"><span>曲轮-1.DWG</span><Close>×</Close></DocTab>
          </DocTabs>
          <Canvas><Drawing /></Canvas>
          <SheetTabs>
            <svg width="71" height="15" viewBox="0 0 71 15" fill="#666" role="img" aria-label="布局导航">
              <path d="M3 6h1v7H3zM9 6v7L5 9.500zM26 6v7l-4-3.500zM37 6v7l4-3.500zM53 6v7l4-3.500zM58 6h1v7h-1z" />
              <path d="M66 0l6 15V0z" fill="#fff" /><path d="M66.500 0l6 15" stroke="#888" />
            </svg>
            <SheetTab $active>模型</SheetTab><SheetTab>Layout1</SheetTab><SheetTab>Layout2</SheetTab>
          </SheetTabs>
        </Work>
      </Body>
      <Watermark>CSDN @biyezuopin</Watermark>
    </Shell>
  );
}
